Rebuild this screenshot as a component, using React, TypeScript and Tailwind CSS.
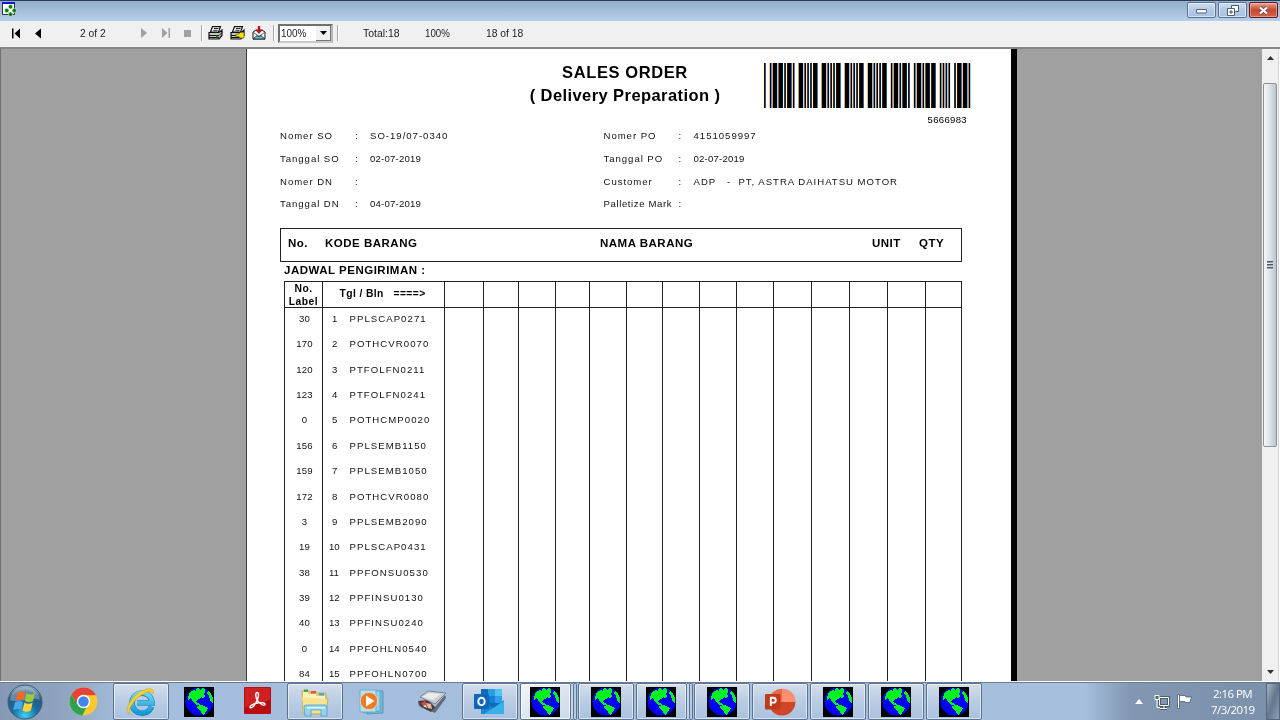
import React from "react";

const ROWS: [string, string][] = [
  ["30", "PPLSCAP0271"],
  ["170", "POTHCVR0070"],
  ["120", "PTFOLFN0211"],
  ["123", "PTFOLFN0241"],
  ["0", "POTHCMP0020"],
  ["156", "PPLSEMB1150"],
  ["159", "PPLSEMB1050"],
  ["172", "POTHCVR0080"],
  ["3", "PPLSEMB2090"],
  ["19", "PPLSCAP0431"],
  ["38", "PPFONSU0530"],
  ["39", "PPFINSU0130"],
  ["40", "PPFINSU0240"],
  ["0", "PPFOHLN0540"],
  ["84", "PPFOHLN0700"],
];

const TABLE_COLS =
  "grid grid-cols-[38px_122px_39px_35px_37px_34px_37px_36px_37px_37px_37px_38px_38px_38px_38px_36px]";

/* Code 39 element widths, bars and spaces alternating */
const CODE39: Record<string, string> = {
  "*": "nwnnwnwnn",
  "3": "wnwwnnnnn",
  "5": "wnnwwnnnn",
  "6": "nnwwwnnnn",
  "8": "wnnwnnwnn",
  "9": "nnwwnnwnn",
};

function Barcode({ value }: { value: string }) {
  let x = 0;
  let d = "";
  for (const ch of `*${value}*`) {
    CODE39[ch].split("").forEach((el, i) => {
      const w = el === "w" ? 3 : 1;
      if (i % 2 === 0) d += `M${x} 0h${w + 0.15}v10h${-w - 0.15}z`;
      x += w;
    });
    x += 1;
  }
  return (
    <svg className="block h-[45px] w-[206px] overflow-visible" viewBox="0 0 143 10" preserveAspectRatio="none">
      <path d={d} fill="#00ffff" transform="translate(0.14 0)" className="mix-blend-multiply" />
      <path d={d} fill="#ff00ff" className="mix-blend-multiply" />
      <path d={d} fill="#ffff00" transform="translate(-0.14 0)" className="mix-blend-multiply" />
    </svg>
  );
}

function Globe() {
  return (
    <svg className="block h-[30px] w-[30px] shrink-0" viewBox="0 0 30 30" shapeRendering="crispEdges">
      <rect width="30" height="30" fill="#000" />
      <circle cx="15.500" cy="14.500" r="14" fill="#0000fa" />
      <g fill="#00f31c">
        <path d="M4 11L5 7L7 4L10 3L12 4L13 1L15 1L16 3L19 1L21 3L21 5L20 6L21 9L19 12L17 10L15 12L13 13L12 15L14 16L16 18L13 18L10 16L8 13L6 11L4 13Z" />
        <path d="M13 19L17 18L20 19L24 21L23 24L21 25L20 29L18 27L17 24L14 22Z" />
        <path d="M24 4L27 7L29 11L29 16L27 15L26 12L25 9L23 6Z" />
      </g>
    </svg>
  );
}

function StartOrb() {
  return (
    <svg className="block h-[36px] w-[36px]" viewBox="0 0 36 36">
      <defs>
        <radialGradient id="orb" cx="0.5" cy="0.9" r="0.85">
          <stop offset="0" stopColor="#3fd0f0" />
          <stop offset="0.45" stopColor="#15699f" />
          <stop offset="0.8" stopColor="#2c5a80" />
          <stop offset="1" stopColor="#89aac2" />
        </radialGradient>
      </defs>
      <circle cx="18" cy="18" r="17" fill="url(#orb)" stroke="#3d5a76" />
      <path d="M3 16C5 -1 31 -1 33 16C24 12 12 20 3 16Z" fill="#fff" opacity=".28" />
      <path d="M10.500 8.500Q14 6 18 8.500L16.500 16.500Q12.500 14.500 8.500 16.800Z" fill="#f0692a" />
      <path d="M19.300 9.200Q23.500 12 28 9.200L26 17Q22 19.500 17.800 17Z" fill="#9ccb3b" />
      <path d="M8 18.300Q12 16 16 18L14.300 26Q10.500 24 6 26.300Z" fill="#49a8e8" />
      <path d="M17.400 18.500Q21.500 21 25.700 18.500L23.800 26.500Q19.500 29 15.500 26.500Z" fill="#ffd23a" />
    </svg>
  );
}

function Chrome() {
  return (
    <svg className="block h-[29px] w-[29px]" viewBox="0 0 48 48">
      <circle cx="24" cy="24" r="23" fill="#fbc92e" />
      <path d="M4 12.500A23 23 0 0 1 44.500 13.500H24A11 11 0 0 0 14.500 29.500Z" fill="#e5433a" />
      <path d="M4 12.500L14.500 29.500A11 11 0 0 0 29 33.500L22 47A23 23 0 0 1 4 12.500Z" fill="#2da34e" />
      <circle cx="24" cy="24" r="11" fill="#fff" />
      <circle cx="24" cy="24" r="8.700" fill="#4385f0" />
    </svg>
  );
}

function Explorer() {
  return (
    <svg className="block h-[30px] w-[30px]" viewBox="0 0 30 30">
      <defs>
        <linearGradient id="ie" x1="0" y1="0" x2="0" y2="1">
          <stop offset="0" stopColor="#72d7f7" />
          <stop offset="1" stopColor="#159bd6" />
        </linearGradient>
      </defs>
      <path
        d="M25.500 19.500A10 10 0 1 1 26 15V16H11"
        fill="none"
        stroke="#1583ba"
        strokeWidth="5.600"
      />
      <path d="M25.300 19.500A10 10 0 1 1 26 15V16H11" fill="none" stroke="url(#ie)" strokeWidth="4.400" />
      <path
        d="M3 27C-3 23 7 7 18 3C25 .500 29 2 27 7C26 4 23 4 18 6.500C9 11 2 21 3 27Z"
        fill="#fbd02f"
        stroke="#d9a514"
        strokeWidth=".6"
      />
    </svg>
  );
}

function Acrobat() {
  return (
    <svg className="block h-[27px] w-[27px]" viewBox="0 0 27 27">
      <rect width="27" height="27" rx="1" fill="#b90d12" />
      <path d="M1 1H26V13L1 20Z" fill="#cf2024" />
      <path
        d="M13.200 13C11 9 11.500 5.500 13.200 5.500C15 5.500 14.800 9.500 13.200 13C11.500 17 8.500 21 6.500 20.800C4.500 20 8 17 13 16C17 15.200 21.500 15.500 21 17.500C20 19.500 15.500 17 13.200 13Z"
        fill="none"
        stroke="#fff"
        strokeWidth="1.400"
      />
    </svg>
  );
}

function Folder() {
  return (
    <svg className="block h-[30px] w-[30px]" viewBox="0 0 30 30">
      <path d="M2 4L8 3L10 5H15L17 6H26V11L28 12L26 27H3Z" fill="#e9cc69" stroke="#c5a343" strokeWidth=".7" />
      <path d="M3 5H6V4H8V7H16V9H25V12H3Z" fill="#fbf2b8" />
      <path d="M4 2.500H8V5H4Z" fill="#34a853" />
      <path d="M11 4H16V6.500H11Z" fill="#e25142" />
      <path d="M19 6H24V8.500H19Z" fill="#4ba5dd" />
      <path d="M2 10L27 12L26 26L4 26Z" fill="#f6e394" />
      <path d="M4 20Q4 18 6 18H25Q27 18 27 20V29H21V23H11V29H5Z" fill="#94d2ee" stroke="#4c9fce" strokeWidth=".8" />
      <path d="M7 20H25V21.500H7Z" fill="#dcf3fb" />
    </svg>
  );
}

function MediaPlayer() {
  return (
    <svg className="block h-[26px] w-[28px]" viewBox="0 0 28 26">
      <path d="M8 2H24V24L8 25Z" fill="#78b9d8" stroke="#5598bb" />
      <path d="M4 2H21V22L4 24Z" fill="#9fd2e8" stroke="#5fa5c7" />
      <path d="M1 1H17V23H1Z" fill="#b7dff0" stroke="#6aaecc" />
      <circle cx="10" cy="12" r="8.700" fill="#ef7b1f" stroke="#d1d9dd" />
      <path d="M7 6.500L15.500 12L7 17.500Z" fill="#fff" />
    </svg>
  );
}

function Scanner() {
  return (
    <svg className="block h-[24px] w-[30px]" viewBox="0 0 30 24">
      <path d="M1 12L18 17L28 5L29 8L18 23L2 16Z" fill="#626973" />
      <path d="M1 11L11 10L18 17L14 22L4 17Z" fill="#4b3b3e" />
      <path d="M4 13L8 11L10 14L7 17Z" fill="#d44a32" />
      <path d="M9 13L14 14L15 19L11 18Z" fill="#e9b89b" />
      <path d="M6 16L9 15L10 18Z" fill="#dff2fb" />
      <path d="M3 7L11 1L29 3L18 14Z" fill="#c9cdd1" stroke="#6e737b" strokeWidth=".8" />
      <path d="M5 7L12 3L24 4L16 10Z" fill="#e9ebed" />
    </svg>
  );
}

function Outlook() {
  return (
    <svg className="block h-[28px] w-[31px]" viewBox="0 0 31 28">
      <rect x="7" y="1" width="21" height="20" fill="#0f6cbd" />
      <path d="M14 1H21V8H14Z" fill="#2a9be6" />
      <path d="M21 1H28V8H21Z" fill="#4fc3f2" />
      <path d="M14 8H21V15H14Z" fill="#1580d3" />
      <path d="M21 8H28V15H21Z" fill="#2e9fe8" />
      <path d="M7 14L19 20L30 12V26H7Z" fill="#1d86d2" />
      <path d="M10 26L30 13V26Z" fill="#37b0ec" />
      <rect y="6" width="15" height="15" rx="1" fill="#0c67ba" />
      <ellipse cx="7.500" cy="13.500" rx="3.200" ry="3.700" fill="none" stroke="#fff" strokeWidth="2" />
    </svg>
  );
}

function PowerPoint() {
  return (
    <svg className="block h-[28px] w-[31px]" viewBox="0 0 31 28">
      <circle cx="17" cy="14" r="13.300" fill="#ea6a48" />
      <path d="M17 .700A13.300 13.300 0 0 1 30.300 14H17Z" fill="#fb8f70" />
      <path d="M3.700 14H30.300A13.300 13.300 0 0 1 3.700 14Z" fill="#cf4527" />
      <rect y="6" width="15.500" height="15.500" rx="1" fill="#c03a1b" />
      <path d="M5.800 18V9.700H8.300A2.300 2.300 0 0 1 8.300 14.600H5.800" fill="none" stroke="#fff" strokeWidth="1.900" />
    </svg>
  );
}

const BTN =
  "flex h-[37px] items-center justify-center rounded-[2px] border border-[#5c7390] bg-linear-to-b from-[#d3deec] via-[#b9cce3] to-[#a9c2df] shadow-[inset_0_0_0_1px_rgba(255,255,255,0.55)]";
const BTN_ACTIVE =
  "flex h-[37px] items-center justify-center rounded-[2px] border border-[#5c7390] bg-linear-to-br from-[#f4f7fb] via-[#dde6f1] to-[#c9d9ec] shadow-[inset_0_0_0_1px_rgba(255,255,255,0.8)]";

function Slot({ children, kind = "open" }: { children: React.ReactNode; kind?: "open" | "pinned" | "active" | "stack" }) {
  if (kind === "pinned") return <div className="flex h-[37px] w-[58.1px] items-center justify-center pr-[2px]">{children}</div>;
  if (kind === "active" || kind === "stack") {
    return (
      <div className="flex w-[58.1px]">
        <div className={(kind === "active" ? BTN_ACTIVE : BTN) + " w-[51px]"}>{children}</div>
        <div className="h-[37px] w-[3px] rounded-r-[2px] border-y border-r border-[#5c7390] bg-[#c8d7e8]" />
        <div className="h-[37px] w-[3px] rounded-r-[2px] border-y border-r border-[#5c7390] bg-[#b4c9e1]" />
      </div>
    );
  }
  return (
    <div className="w-[58.1px] pr-[2px]">
      <div className={BTN}>{children}</div>
    </div>
  );
}

function Taskbar() {
  return (
    <div className="flex h-[38px] w-full border-t border-[#6b7c92] bg-[linear-gradient(90deg,#8599b3_0,#8ea3bf_60px,#a5bedd_125px,#a6bfdd_1085px,#8197b2_1130px,#7b90aa_1280px)]">
      <div className="flex w-[55px] items-center pl-[7px]">
        <StartOrb />
      </div>
      <div className="flex w-[58px] items-center pl-[14px]">
        <Chrome />
      </div>
      <Slot><Explorer /></Slot>
      <Slot kind="pinned"><Globe /></Slot>
      <Slot kind="pinned"><div className="pb-[3px] pl-[1px]"><Acrobat /></div></Slot>
      <Slot><Folder /></Slot>
      <Slot kind="pinned"><MediaPlayer /></Slot>
      <Slot kind="pinned"><Scanner /></Slot>
      <Slot><Outlook /></Slot>
      <Slot kind="active"><Globe /></Slot>
      <Slot><Globe /></Slot>
      <Slot kind="stack"><Globe /></Slot>
      <Slot><Globe /></Slot>
      <Slot><PowerPoint /></Slot>
      <Slot><Globe /></Slot>
      <Slot><Globe /></Slot>
      <Slot><Globe /></Slot>
      <div className="ml-auto flex items-center">
        <svg className="mr-[11px] block h-[5px] w-[8px]" viewBox="0 0 8 5"><path d="M0 5L4 0L8 5Z" fill="#fff" /></svg>
        <svg className="mr-[7px] block h-[16px] w-[16px]" viewBox="0 0 16 16" fill="none" stroke="#fff">
          <path d="M5.500 3.500H14.500V11.500H5.500ZM10 12V14M6 14.500H13" stroke="#3c4b5e" strokeWidth="2.500" />
          <path d="M5.500 3.500H14.500V11.500H5.500ZM10 12V14M6 14.500H13M3 6V13.500H6" />
          <path d="M1 1.500H5V5.500H1Z" fill="#52657c" />
        </svg>
        <svg className="mr-[19px] block h-[15px] w-[15px]" viewBox="0 0 15 15" fill="#fff" stroke="#4a5b70" strokeWidth=".8">
          <path d="M.500 .500H2.500V14.500H.500Z" />
          <path d="M2.500 1.500H8.500L9 3H14.500L13 8.500H8.500L8 7.500H2.500Z" />
        </svg>
        <div className="mr-[12px] w-[43px] whitespace-nowrap text-center font-['Open_Sans',sans-serif] text-[11.5px] leading-[16px] tracking-[-0.55px] text-white">
          <div>2:16 PM</div>
          <div>7/3/2019</div>
        </div>
        <div className="h-[37px] w-[14px] border border-[#53667d] bg-linear-to-br from-[#a4b3c3] via-[#64778d] to-[#8b9fb6]" />
      </div>
    </div>
  );
}

function TitleBar() {
  return (
    <div className="flex h-[21px] w-full justify-between border-t border-[#2d3e58] bg-linear-to-b from-[#93aecb] to-[#b6cfeb]">
      <svg className="ml-[2px] mt-px block h-[15px] w-[15px]" viewBox="0 0 15 15">
        <path d="M.500 .500H12.500V12.500H.500Z" fill="#fff" stroke="#333" />
        <path d="M0 0H13V2H0Z" fill="#1414d8" />
        <g fill="#0b7d13" stroke="#fff" strokeWidth=".5">
          <circle cx="8.500" cy="4.800" r="2.200" />
          <circle cx="4.800" cy="8.500" r="2.200" />
          <circle cx="12.300" cy="8.500" r="2.200" />
          <circle cx="8.500" cy="12.300" r="2.200" />
        </g>
      </svg>
      <div className="mr-[2px] mt-px flex h-[16px] gap-[2px]">
        <div className="flex w-[29px] items-center justify-center rounded-[2px] border border-[#5a7290] bg-linear-to-b from-[#cbdcf0] via-[#b4cae4] to-[#a6c2e2] shadow-[inset_0_0_0_1px_rgba(255,255,255,0.5)]">
          <svg className="mt-[3px] block h-[5px] w-[11px]" viewBox="0 0 11 5"><rect x=".5" y=".5" width="10" height="3.500" rx=".5" fill="#fff" stroke="#535d6b" /></svg>
        </div>
        <div className="flex w-[29px] items-center justify-center rounded-[2px] border border-[#5a7290] bg-linear-to-b from-[#cbdcf0] via-[#b4cae4] to-[#a6c2e2] shadow-[inset_0_0_0_1px_rgba(255,255,255,0.5)]">
          <svg className="block h-[11px] w-[12px]" viewBox="0 0 12 11" fill="#fff" stroke="#535d6b">
            <path d="M4.500 .500H11.500V6.500H4.500Z" />
            <path d="M.500 3.500H7.500V10.500H.500Z" />
            <path d="M3 6H5V8H3Z" fill="#b4cae4" />
          </svg>
        </div>
        <div className="flex w-[29px] items-center justify-center rounded-[2px] border border-[#5c1d1a] bg-linear-to-b from-[#e3a193] via-[#c8452c] to-[#d2654a] shadow-[inset_0_0_0_1px_rgba(255,255,255,0.35)]">
          <svg className="block h-[9px] w-[11px]" viewBox="0 0 11 9" fill="none">
            <path d="M2 1.500L9 7.500M9 1.500L2 7.500" stroke="#6b4a4a" strokeWidth="3.800" />
            <path d="M2 1.500L9 7.500M9 1.500L2 7.500" stroke="#fff" strokeWidth="2.300" />
          </svg>
        </div>
      </div>
    </div>
  );
}

function Printer({ badge = false }: { badge?: boolean }) {
  return (
    <svg className="block h-[14px] w-[15px]" viewBox="0 0 15 14">
      <path d="M4.500 .700H12.500L10.500 6H2.500Z" fill="#fff" stroke="#111" strokeWidth="1.200" />
      <path d="M6 2.500H10.500M5.300 4.300H9.500" stroke="#222" />
      <path d="M1 6.500H11L14 4V9.500L11 13H1Z" fill="#c9c9bf" stroke="#111" strokeWidth="1.200" />
      <path d="M1 9.500H11L14 6.500M1 11.500H11" fill="none" stroke="#111" />
      {badge ? (
        <path d="M6 8H9L10 6.500H14V12H10L9 10.500H6Z" fill="#f1df12" stroke="#6c6400" strokeWidth=".7" />
      ) : (
        <path d="M8 10.500H10.500" stroke="#38a338" strokeWidth="1.200" />
      )}
    </svg>
  );
}

function Divider() {
  return <div className="h-[16px] w-[2px] border-l border-[#a7a7a7] bg-white" />;
}

function Toolbar() {
  const t = "origin-left whitespace-nowrap font-['Liberation_Sans',sans-serif] text-[11px] leading-[14px] text-[#1c1c1c]";
  return (
    <div className="flex h-[26px] w-full items-center bg-[#f0f0f0] pb-[2px] pl-[12px]">
      <div className="flex w-[68px] items-center gap-[15px]">
        <svg className="block h-[11px] w-[9px]" viewBox="0 0 9 11"><path d="M0 .500H1.500V10.500H0ZM8 .500V10.500L2.500 5.500Z" /></svg>
        <svg className="ml-[-1px] block h-[11px] w-[6px]" viewBox="0 0 6 11"><path d="M6 .500V10.500L0 5.500Z" /></svg>
      </div>
      <div className={t + " w-[61px] scale-x-[0.93]"}>2 of 2</div>
      <div className="flex w-[60px] items-center">
        <svg className="block h-[10px] w-[6px]" viewBox="0 0 6 10"><path d="M0 0V10L6 5Z" fill="#a0a0a0" /></svg>
        <svg className="ml-[15px] block h-[10px] w-[8px]" viewBox="0 0 8 10"><path d="M0 0V10L5.500 5ZM6.500 0H8V10H6.500Z" fill="#a0a0a0" /></svg>
        <div className="ml-[14px] h-[7px] w-[7px] bg-[#a0a0a0]" />
      </div>
      <Divider />
      <div className="ml-[5px] flex w-[62px] items-center gap-[7px]">
        <Printer />
        <Printer badge />
        <svg className="block h-[14px] w-[14px]" viewBox="0 0 14 14">
          <path d="M1 6L4 4H10L13 6V13H1Z" fill="#fff" stroke="#111" />
          <path d="M1 13L5 9.500L7 10.500L9 9.500L13 13Z" fill="#4fc3cf" stroke="#222" strokeWidth=".8" />
          <path d="M1.500 6.500L7 10.500L12.500 6.500" fill="none" stroke="#333" strokeWidth=".8" />
          <path d="M7 8L3.500 4H5.800V0H8.200V4H10.500Z" fill="#c1101f" />
        </svg>
      </div>
      <div className="ml-[3px]"><Divider /></div>
      <div className="ml-[3px] flex h-[19px] w-[55px] items-stretch border-2 border-t-[#6f6f6f] border-l-[#6f6f6f] border-r-[#b9b9b9] border-b-[#c9c9c9] bg-white">
        <div className={t + " w-[36px] scale-x-[0.9] pl-px"}>100%</div>
        <div className="ml-auto flex w-[15px] shrink-0 items-center justify-center border-r border-b border-[#777] bg-[#f0f0f0]">
          <svg className="block h-[4px] w-[7px]" viewBox="0 0 7 4"><path d="M0 0H7L3.500 4Z" /></svg>
        </div>
      </div>
      <div className="ml-[4px]"><Divider /></div>
      <div className={t + " ml-[23.5px] w-[62px] scale-x-[0.95]"}>Total:18</div>
      <div className={t + " w-[61px] scale-x-[0.88]"}>100%</div>
      <div className={t + " scale-x-[0.94]"}>18 of 18</div>
    </div>
  );
}

function Field({ label, value, tight = false }: { label: string; value: string; tight?: boolean }) {
  return (
    <div className="flex h-[22.7px] whitespace-pre">
      <span className={label.length > 12 ? "w-[75px] tracking-[0.6px]" : "w-[75px]"}>{label}</span>
      <span className="w-[15px]">:</span>
      <span className={tight ? "tracking-[0.2px]" : "tracking-[0.98px]"}>{value}</span>
    </div>
  );
}

function Page() {
  return (
    <div className="h-full w-[771px] border-l-[1px] border-r-[6px] border-l-[#3c3c3c] border-r-black bg-white pl-[33px] font-['Liberation_Sans',Arial,sans-serif] text-black">
      <div className="flex h-[80px]">
        <div className="w-[484px] pl-[205px] pt-[12px] text-center text-[16.5px] font-bold leading-[23px]">
          <div className="w-[280px] tracking-[0.6px]">SALES ORDER</div>
          <div className="w-[280px] tracking-[0.42px]">( Delivery Preparation )</div>
        </div>
        <div className="w-[206px] pt-[14px]">
          <Barcode value="5666983" />
          <div className="pr-[3px] pt-[6px] text-right text-[9.6px] leading-[12px] tracking-[0.3px]">5666983</div>
        </div>
      </div>
      <div className="flex h-[99px] text-[9.6px] leading-[12px] tracking-[0.95px] text-[#111]">
        <div className="w-[323.5px] pt-[1.4px]">
          <Field label="Nomer SO" value="SO-19/07-0340" />
          <Field label="Tanggal SO" value="02-07-2019" tight />
          <Field label="Nomer DN" value="" />
          <Field label="Tanggal DN" value="04-07-2019" tight />
        </div>
        <div className="pt-[1.2px]">
          <Field label="Nomer PO" value="4151059997" />
          <Field label="Tanggal PO" value="02-07-2019" tight />
          <Field label="Customer" value="ADP   -  PT, ASTRA DAIHATSU MOTOR" />
          <Field label="Palletize Mark" value="" />
        </div>
      </div>
      <div className="flex h-[34px] w-[682px] items-center border border-[#222] pb-[5px] pl-[7px] text-[11.5px] font-bold leading-[14px] tracking-[0.5px]">
        <span className="w-[37px]">No.</span>
        <span className="w-[275px]">KODE BARANG</span>
        <span className="w-[272px]">NAMA BARANG</span>
        <span className="w-[47px]">UNIT</span>
        <span>QTY</span>
      </div>
      <div className="h-[19px] pl-[4px] pt-px text-[11.5px] font-bold leading-[14px] tracking-[0.5px]">JADWAL PENGIRIMAN :</div>
      <div className="ml-[4px] w-[678px] border-r border-t border-[#222]">
        <div className={TABLE_COLS + " h-[26px] border-b border-[#222] text-[10.3px] font-bold"}>
          <div className="border-l border-[#222] text-center leading-[13px] tracking-[0.5px]">
            <div>No.</div>
            <div>Label</div>
          </div>
          <div className="flex items-center whitespace-nowrap border-l border-[#222] pb-[2px] pl-[16.5px] tracking-[0.4px]">
            <span className="w-[54px]">Tgl / Bln</span>
            <span>====&gt;</span>
          </div>
          {Array.from({ length: 14 }, (_, i) => (
            <div key={i} className="border-l border-[#222]" />
          ))}
        </div>
        <div className={TABLE_COLS + " h-[376px] overflow-hidden text-[9.6px] leading-[22.6px] text-[#111]"}>
          <div className="border-l border-[#222] pl-[2px] text-center tracking-[0.2px]">
            {ROWS.map(([label], i) => (
              <div key={i} className="h-[25.36px]">{label}</div>
            ))}
          </div>
          <div className="border-l border-[#222]">
            {ROWS.map(([, code], i) => (
              <div key={code} className="flex h-[25.36px]">
                <span className={i < 9 ? "w-[26.5px] pl-[9px]" : "w-[26.5px] pl-[6px]"}>{i + 1}</span>
                <span className="tracking-[1.05px]">{code}</span>
              </div>
            ))}
          </div>
          {Array.from({ length: 14 }, (_, i) => (
            <div key={i} className="border-l border-[#222]" />
          ))}
        </div>
      </div>
    </div>
  );
}

function ScrollBar() {
  return (
    <div className="flex w-[17px] flex-col items-center border-r border-[#d8d8d8] bg-[#f0f0f0]">
      <div className="flex h-[34px] w-full items-start justify-center pt-[7px]">
        <svg className="block h-[4px] w-[7px]" viewBox="0 0 7 4"><path d="M0 4L3.500 0L7 4Z" fill="#333" /></svg>
      </div>
      <div className="flex h-[364px] w-[14px] flex-col items-center justify-center gap-px rounded-[2px] border border-[#8e9399] bg-linear-to-r from-[#f5f6f7] via-[#dde2e7] to-[#b9c4cf]">
        <div className="h-[2px] w-[6px] border-b border-[#98a2ac] bg-[#4d565f]" />
        <div className="h-[2px] w-[6px] border-b border-[#98a2ac] bg-[#4d565f]" />
        <div className="h-[2px] w-[6px] border-b border-[#98a2ac] bg-[#4d565f]" />
      </div>
      <div className="mt-auto pb-[7px]">
        <svg className="block h-[4px] w-[7px]" viewBox="0 0 7 4"><path d="M0 0H7L3.500 4Z" fill="#333" /></svg>
      </div>
    </div>
  );
}

export default function App() {
  return (
    <div className="flex h-[720px] w-[1280px] flex-col overflow-hidden bg-white">
      <TitleBar />
      <Toolbar />
      <div className="flex h-[634px] border-l border-t-2 border-l-[#707070] border-t-[#868686] bg-[#a0a0a0]">
        <div className="w-[245px] shrink-0" />
        <Page />
        <div className="flex-1" />
        <ScrollBar />
        <div className="w-px bg-white" />
      </div>
      <div className="h-px bg-white" />
      <Taskbar />
    </div>
  );
}
